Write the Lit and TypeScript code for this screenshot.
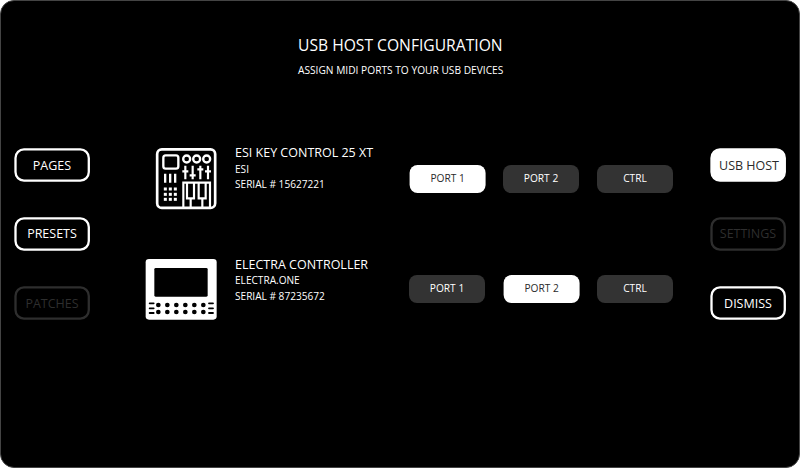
import { LitElement, html, css, svg } from "lit";
import { customElement, property } from "lit/decorators.js";

type Variant = "outline" | "solid" | "disabled";

@customElement("nav-button")
class NavButton extends LitElement {
  @property() label = "";
  @property({ reflect: true }) variant: Variant = "outline";
  static styles = css`
    :host { display: block; }
    .frame { display: block; width: 76px; height: 34px; }
    .btn { display: grid; width: 76px; height: 34px; color: #fff; }
    .btn > * { grid-area: 1 / 1; }
    .label {
      align-self: center; justify-self: center; padding-top: 1px;
      font: 12.5px/16px "Open Sans", "Noto Sans", sans-serif; white-space: nowrap;
    }
    :host(:nth-of-type(2)) .label { padding-top: 0; padding-bottom: 1px; }
    rect { fill: #000; stroke: #fff; stroke-width: 2.3; }
    .solid { color: #2a2a2a; }
    .solid rect { fill: #fff; }
    .solid .label { padding-left: 2px; }
    .disabled { color: #2e2e2e; }
    .disabled rect { stroke: #2e2e2e; }
  `;
  render() {
    return html`<div class="btn ${this.variant}" role="button">
      <svg class="frame" viewBox="0 0 76 34"><rect x="1.500" y="1.400" width="73.300" height="31.200" rx="8.500"/></svg>
      <span class="label">${this.label}</span>
    </div>`;
  }
}

@customElement("device-row")
class DeviceRow extends LitElement {
  @property() name = "";
  @property() vendor = "";
  @property() serial = "";
  @property() icon = "";
  @property({ type: Number }) port = 1;
  static styles = css`
    :host { display: flex; height: 80px; font-family: "Open Sans", "Noto Sans", sans-serif; color: #fff; }
    .icon { width: 90px; height: 80px; flex: none; display: block; }
    .info { width: 179px; padding: 4px 0 0 5px; flex: none; box-sizing: border-box; white-space: nowrap; }
    .controller { padding-top: 5.5px; }
    .name { font-size: 12.5px; line-height: 17px; }
    .line { font-size: 10.1px; line-height: 15.5px; }
    .synth .vendor { margin: 1px 0 -1px; }
    .controller .serial { margin-top: 1px; }
    .ports { display: flex; gap: 18px; padding-top: 25px; }
    .port {
      width: 76px; height: 28px; border-radius: 8px; background: #333; font-size: 10.2px; line-height: 14px;
      box-sizing: border-box; padding-bottom: 2px;
      display: flex; align-items: center; justify-content: center;
    }
    .active { background: #fff; color: #2a2a2a; transform: translateX(0.6px); }
  `;

  private synth() {
    return svg`
      <rect x="51.500" y="28" width="174" height="175.500" rx="14" fill="none" stroke="#fff" stroke-width="8"/>
      <rect x="70" y="46" width="45" height="40" rx="7" fill="none" stroke="#fff" stroke-width="7"/>
      ${[140, 170, 200].map((x) => svg`<circle cx=${x} cy="57" r="10.500" fill="none" stroke="#fff" stroke-width="7"/>`)}
      ${[[136, 94], [158, 106], [181, 88], [204, 94]].map(([x, y]) => svg`
        <path d="M${x} 77V118M${x - 9} ${y}H${x + 9}" stroke="#fff" stroke-width="6.500"/>`)}
      <path d="M75.500 101V128M90.500 101V128M105.500 101V128" stroke="#fff" stroke-width="7"/>
      ${[147, 163, 178].map((y) => [76, 91, 106].map((x) => svg`<rect x=${x - 4.5} y=${y - 4.5} width="9" height="9" fill="#fff"/>`))}
      <path d="M130 202V128H210V202M141 128V175H162V128M176 128V175H197V128M152 175V202M187 175V202" fill="none" stroke="#fff" stroke-width="6.500"/>`;
  }

  private controller() {
    return svg`
      <rect x="17" y="27" width="213" height="182" rx="10" fill="#fff"/>
      <rect x="43" y="54" width="160" height="86" rx="4" fill="#000"/>
      ${[160, 175, 189].map((y) => svg`<path d="M29 ${y}H41M207 ${y}H219" stroke="#000" stroke-width="5.500" stroke-linecap="round"/>`)}
      ${[165, 186].map((y) => [55, 82, 109, 136, 163, 190].map((x) => svg`<circle cx=${x} cy=${y} r="7" fill="#000"/>`))}`;
  }

  render() {
    return html`
      <svg class="icon" viewBox="0 0 270 240">${this.icon === "synth" ? this.synth() : this.controller()}</svg>
      <div class="info ${this.icon}">
        <div class="name">${this.name}</div>
        <div class="line vendor">${this.vendor}</div>
        <div class="line serial">SERIAL # ${this.serial}</div>
      </div>
      <div class="ports">
        ${["PORT 1", "PORT 2", "CTRL"].map((p, i) => html`<div class="port ${i + 1 === this.port ? "active" : ""}">${p}</div>`)}
      </div>`;
  }
}

@customElement("app-root")
class AppRoot extends LitElement {
  static styles = css`
    :host { display: block; width: 800px; height: 468px; background: #fff; overflow: hidden; }
    .screen {
      box-sizing: border-box; width: 800px; height: 468px; border: 1px solid #444; border-radius: 14px;
      background: #000; color: #fff; font-family: "Open Sans", "Noto Sans", sans-serif;
    }
    header { height: 139px; box-sizing: border-box; padding: 33px 0 0 297px; white-space: nowrap; }
    h1 { margin: 0; font-size: 15.65px; line-height: 22px; font-weight: 400; }
    p { margin: 7px 0 0; font-size: 10.2px; line-height: 14px; }
    .body { display: flex; }
    nav { display: flex; flex-direction: column; gap: 35px; padding: 8px 0 0 13px; }
    main { display: flex; flex-direction: column; gap: 30px; margin-left: 50px; width: 556px; flex: none; }
    nav.right { padding-left: 14px; }
  `;
  render() {
    return html`
      <div class="screen">
        <header>
          <h1>USB HOST CONFIGURATION</h1>
          <p>ASSIGN MIDI PORTS TO YOUR USB DEVICES</p>
        </header>
        <div class="body">
          <nav>
            <nav-button label="PAGES"></nav-button>
            <nav-button label="PRESETS"></nav-button>
            <nav-button label="PATCHES" variant="disabled"></nav-button>
          </nav>
          <main>
            <device-row icon="synth" name="ESI KEY CONTROL 25 XT" vendor="ESI" serial="15627221" port="1"></device-row>
            <device-row icon="controller" name="ELECTRA CONTROLLER" vendor="ELECTRA.ONE" serial="87235672" port="2"></device-row>
          </main>
          <nav class="right">
            <nav-button label="USB HOST" variant="solid"></nav-button>
            <nav-button label="SETTINGS" variant="disabled"></nav-button>
            <nav-button label="DISMISS"></nav-button>
          </nav>
        </div>
      </div>`;
  }
}
